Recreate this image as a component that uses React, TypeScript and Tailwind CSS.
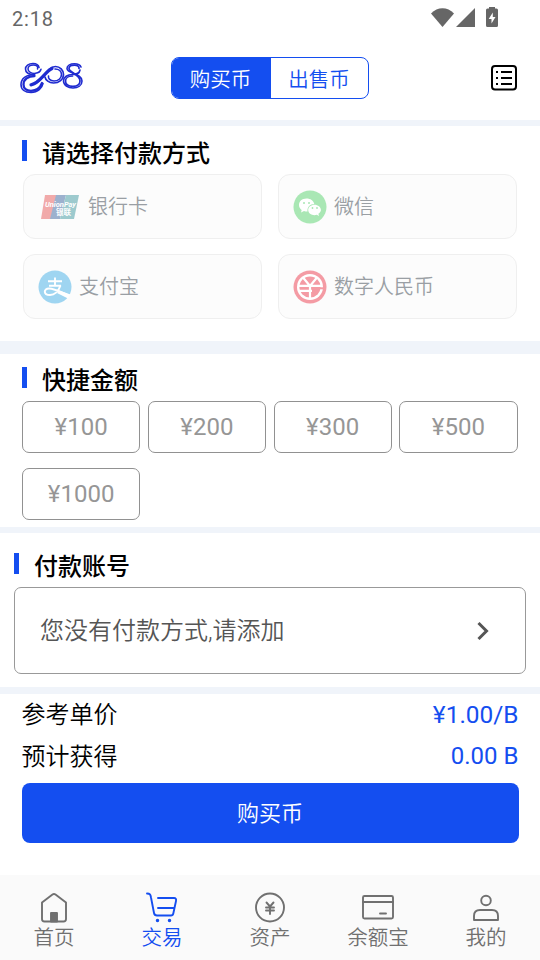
import type { ReactNode } from 'react'

const amounts = [100, 200, 300, 500, 1000]

function Heading({ children }: { children: ReactNode }) {
    return (
        <div className="flex items-start h-7">
            <span className="w-[5px] h-[21px] bg-[#144ef0] mt-[2px]"></span>
            <h2 className="ml-[15px] mt-[2px] text-[24px] leading-7 font-medium text-black">{children}</h2>
        </div>
    )
}

function StatusBar() {
    return (
        <div className="flex justify-between items-center h-9 pl-3 pr-[41px] text-[#666]">
            <span className="text-[20px] font-[450] tracking-[0.8px] leading-9 pt-[2px]">2:18</span>
            <svg width="70" height="22" viewBox="0 0 70 22" fill="currentColor">
                <path d="M2 6.500C8.500-.5 18.500-.5 25 6.500L13.500 20Z" />
                <path d="M46 1v19H27Z" />
                <path d="M60 0h6v1.500h1.500q1.500 0 1.500 1.500v15.500q0 1.500-1.500 1.500H58.500q-1.500 0-1.500-1.500V3q0-1.500 1.500-1.500H60Z" />
                <path d="M63.800 5.500 59.700 12H62.500v4.500l4-6.500h-2.700Z" fill="#fff" />
            </svg>
        </div>
    )
}

function Logo() {
    return (
        <svg width="64" height="32" viewBox="0 0 64 32" fill="none" stroke="#1f2bd0" strokeLinecap="round">
            <path d="M19 5.500C18.500 3 16 1.500 13 1.500c-4.500 0-7.500 2.300-7.500 5.500 0 3.500 3.500 5.500 9 5.500" strokeWidth="1.600" />
            <path d="M17.500 7C18.500 4 16 3 13.500 3c-3 0-5.500 1.500-5.500 4 0 3 3.500 4.800 7.500 4.300 3-.3 5-2 5.500-4" strokeWidth="1.500" />
            <path d="M14.500 12.500C6 12.500 1 17 1 22.500 1 27.500 5 30.500 11 30.500c7 0 11-4.500 12-9" strokeWidth="1.600" />
            <path d="M14.500 14C8 14 3.500 17.500 3.500 22.500c0 4 3 6.300 7.500 6.300 6 0 9.500-3.800 11-7.800" strokeWidth="2.300" />
            <path d="M14 22c8-1 12-17.500 21.500-17.500 4.500 0 8 3.500 8 8 0 5-4.500 8.500-10 8.500-4.500 0-8-3-8.500-6" strokeWidth="1.700" />
            <path d="M35 7c4 0 6.500 2.500 6.500 5.500 0 4-3.500 6.500-7.500 6.500-4 0-6-2.500-5.500-5" strokeWidth="1.600" />
            <path d="M11 22.800C20 21.500 24 10.500 32 6.500" strokeWidth="3.200" />
            <path d="M61 5C60 2.500 57.500 1.800 54.500 1.800c-4.500 0-7.500 2-7.500 4.700C47 12 62 11 62 19c0 4.500-4 7-9 7S43.500 23 43.500 19c0-4 4-6.500 9-6.500 4 0 7-1.500 7.500-4.500" strokeWidth="1.600" />
            <path d="M59 6.500C59.500 4 57 3.200 54.500 3.200c-3 0-5.500 1-5.500 3.300C49 10.500 60 12 60 19c0 3-2.500 5.300-7 5.300S45.500 22.500 45.500 19c0-3 3-5 7-5" strokeWidth="1.700" />
        </svg>
    )
}

function Header() {
    return (
        <header className="flex justify-between items-center h-[84px] pl-5 pr-[22px]">
            <div className="w-[151px]">
                <Logo />
            </div>
            <div className="flex w-[198px] h-[42px] border-[1.500px] border-[#144ef0] rounded-[8px] overflow-hidden text-[20.500px] leading-[44px] text-center font-[350]">
                <button className="w-[99px] pr-[2px] bg-[#144ef0] text-white">购买币</button>
                <button className="flex-1 pr-px text-[#144ef0]">出售币</button>
            </div>
            <div className="flex-1 flex justify-end">
                <svg width="28" height="28" viewBox="0 0 28 28" fill="none" stroke="#000" strokeWidth="2">
                    <rect x="2" y="2" width="24" height="23.500" rx="3" />
                    <path d="M11 8h11M11 14h11M11 20h11" />
                    <path d="M6 8h2M6 14h2M6 20h2" />
                </svg>
            </div>
        </header>
    )
}

function UnionPayIcon() {
    return (
        <svg width="40" height="26" viewBox="0 0 40 26">
            <path d="M5 1H17L12 25H1Z" fill="#f1aaaa" />
            <path d="M16 1H26L20 25H10Z" fill="#9cb1ce" />
            <path d="M26 1H39L34 25H20Z" fill="#9dcace" />
            <text x="5" y="12.500" fontSize="7.500" fontStyle="italic" fontWeight="700" fill="#fff" textLength="31" lengthAdjust="spacingAndGlyphs">UnionPay</text>
            <text x="16" y="20.500" fontSize="7.500" fontWeight="700" fill="#fff">银联</text>
        </svg>
    )
}

function WechatIcon() {
    return (
        <svg width="34" height="34" viewBox="0 0 34 34">
            <circle cx="17" cy="17" r="16.500" fill="#a9e7b4" />
            <path d="M13.500 8.500c-4.500 0-7.500 2.800-7.500 6.500 0 2 1 3.700 2.700 5L8 22.500l3-1.500c1 .4 2 .5 3.500.5C14 17 17 14 21.300 14 20.500 10.700 17.500 8.500 13.500 8.500Z" fill="#fff" />
            <path d="M21.500 14.800c-3.500 0-6.300 2.300-6.300 5.200s2.800 5.200 6.300 5.200l2.300-.4 2.200 1.200-.6-2.200c1.500-1 2.500-2.300 2.500-3.800 0-2.900-2.900-5.200-6.400-5.200Z" fill="#fff" />
            <g fill="#a9e7b4"><circle cx="11" cy="13" r="1" /><circle cx="16" cy="13" r="1" /><circle cx="19.500" cy="18" r=".9" /><circle cx="24" cy="18" r=".9" /></g>
        </svg>
    )
}

function AlipayIcon() {
    return (
        <svg width="34" height="34" viewBox="0 0 34 34">
            <circle cx="17" cy="17" r="16.500" fill="#9fd5f1" />
            <path d="M10 11.200h14M17 7.500v8M11 15.800h12" fill="none" stroke="#fff" strokeWidth="1.900" />
            <path d="M22.500 15.500C20.500 21 17 25 12 25c-7 0-6.500-6.500-1-6.500 4.500 0 12 3.500 18 6" fill="none" stroke="#fff" strokeWidth="2" />
            <path d="M21 20.500l11.500 4-2.500 4-11-5.500Z" fill="#fff" />
        </svg>
    )
}

function DigitalYuanIcon() {
    return (
        <svg width="34" height="34" viewBox="0 0 34 34">
            <circle cx="17" cy="17" r="16.500" fill="#f49ba4" />
            <circle cx="17" cy="17" r="13" fill="#fff" />
            <circle cx="17" cy="17" r="10.600" fill="#f49ba4" />
            <path d="M10 7.500l7 8.500 7-8.500M17 16v13M6 15.800h22M6 20.800h13" fill="none" stroke="#fff" strokeWidth="2.200" />
            <path d="M20 18.300h11" stroke="#f49ba4" strokeWidth="2" />
        </svg>
    )
}

const methods = [
    { name: '银行卡', icon: <UnionPayIcon />, pad: 'pl-[16px] gap-2' },
    { name: '微信', icon: <WechatIcon />, pad: 'pl-[14px] gap-[7px]' },
    { name: '支付宝', icon: <AlipayIcon />, pad: 'pl-[14px] gap-[7px]' },
    { name: '数字人民币', icon: <DigitalYuanIcon />, pad: 'pl-[14px] gap-[7px]' },
]

function PaymentMethods() {
    return (
        <section className="h-[221px] border-t-[6px] border-[#f0f4fa] pt-3 pl-[22px] pr-[23px]">
            <Heading>请选择付款方式</Heading>
            <div className="grid grid-cols-2 gap-x-[16px] gap-y-[15px] mt-2 ml-px">
                {methods.map((m) => (
                    <button key={m.name} className={`flex items-center h-[65px] border border-[#efefef] rounded-[12px] bg-[#fcfcfc] text-[20px] font-[350] text-[#9a9fa4] ${m.pad}`}>
                        {m.icon}
                        <span>{m.name}</span>
                    </button>
                ))}
            </div>
        </section>
    )
}

function QuickAmounts() {
    return (
        <section className="h-[186px] border-t-[13px] border-[#f0f4fa] pt-[11px] pl-[22px] pr-[22.500px]">
            <Heading>快捷金额</Heading>
            <div className="grid grid-cols-4 gap-x-[7.500px] gap-y-[15px] mt-2">
                {amounts.map((amount) => (
                    <button key={amount} className="h-[52px] pb-px border-[1.500px] border-[#919191] rounded-[7px] text-[24px] text-[#969696]">¥{amount}</button>
                ))}
            </div>
        </section>
    )
}

function PaymentAccount() {
    return (
        <section className="h-[160px] border-t-[6px] border-[#f0f4fa] pt-[18px] pl-[14px] pr-[14.500px]">
            <Heading>付款账号</Heading>
            <button className="flex justify-between items-center w-full h-[87px] mt-2 border-[1.500px] border-[#999] rounded-[7px] pl-[25px] pr-9">
                <span className="text-[24px] font-[350] text-[#555]">您没有付款方式,请添加</span>
                <svg width="12" height="20" viewBox="0 0 12 20" fill="none" stroke="#555" strokeWidth="3">
                    <path d="M1.500 2l8 8-8 8" />
                </svg>
            </button>
        </section>
    )
}

function Summary() {
    return (
        <section className="flex-1 border-t-[7px] border-[#f0f4fa] px-[21.500px]">
            <div className="flex justify-between items-center h-[42px] text-[24px]">
                <span className="text-black font-[350]">参考单价</span>
                <span className="text-[#144ef0] text-[24.400px]">¥1.00/B</span>
            </div>
            <div className="flex justify-between items-center h-[42px] text-[24px]">
                <span className="text-black font-[350]">预计获得</span>
                <span className="text-[#144ef0] -mt-[2px]">0.00 B</span>
            </div>
            <button className="w-full h-[60px] mt-[5px] rounded-[8px] bg-[#144ef0] text-white text-[22px] font-[350]">购买币</button>
        </section>
    )
}

const tabs = [
    {
        label: '首页',
        icon: <><path d="M6 11.500 16.500 3.500q1.500-1 3 0L30 11.500V28q0 2.500-2.500 2.500H8.500q-2.500 0-2.500-2.500Z" /><path d="M15 22h6v8.500h-6Z" fill="currentColor" /></>,
    },
    {
        label: '交易',
        icon: <><path d="M3 2.500c3 0 3.500 1 4 4l3 15.500c.4 2 1 2.500 3 2.500h14c1.500 0 2-.6 2.300-2L32 10c.4-2-.3-3-2-3H14M14 17h16" /><circle cx="13.500" cy="29.500" r=".8" fill="currentColor" /><circle cx="25.500" cy="29.500" r=".8" fill="currentColor" /></>,
    },
    {
        label: '资产',
        icon: <><circle cx="18" cy="16.500" r="14" /><path d="m14.500 11.500 3.500 4 3.500-4M18 16v7M14 16.500h8M14 19.500h8" /></>,
    },
    {
        label: '余额宝',
        icon: <><rect x="3" y="5" width="30" height="22.500" rx="1.500" /><path d="M3 11h30M20 22.500h6" /></>,
    },
    {
        label: '我的',
        icon: <><circle cx="18" cy="9.500" r="4.800" /><path d="M6 29V25q0-6 6-6h12q6 0 6 6v4Z" /></>,
    },
]

function TabBar() {
    return (
        <nav className="flex h-[85px] bg-[#fafafa]">
            {tabs.map((tab) => (
                <div key={tab.label} className={`flex-1 flex flex-col items-center pt-4 ${tab.label === '交易' ? 'text-[#144ef0]' : 'text-[#707070]'}`}>
                    <svg width="36" height="34" viewBox="0 0 36 34" fill="none" stroke="currentColor" strokeWidth="1.900" strokeLinejoin="round" strokeLinecap="round">{tab.icon}</svg>
                    <span className="text-[20.500px] leading-[26px] font-[350]">{tab.label}</span>
                </div>
            ))}
        </nav>
    )
}

export default function App() {
    return (
        <div className="flex flex-col w-[540px] h-[960px] bg-white overflow-hidden font-[Roboto,'Noto_Sans_CJK_SC',sans-serif]">
            <StatusBar />
            <Header />
            <PaymentMethods />
            <QuickAmounts />
            <PaymentAccount />
            <Summary />
            <TabBar />
        </div>
    )
}
